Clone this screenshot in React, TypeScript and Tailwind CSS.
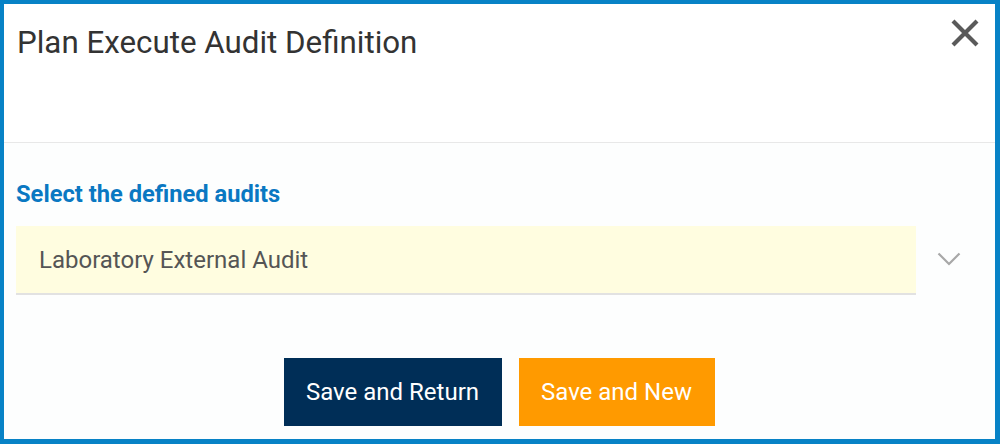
export default function App() {
  return (
    <div
      className="w-[1000px] h-[444px] flex flex-col bg-white border-t-4 border-l-4 border-r-[5px] border-b-[5px] border-[#0782c6]"
      style={{ fontFamily: 'Roboto, "Liberation Sans", sans-serif' }}
    >
      <div className="h-[139px] border-b border-[#e8e8e8] flex justify-between items-start pl-[13px] pr-[14px]">
        <h1 className="mt-[21px] text-[31.3px] leading-[36px] text-[#333333]">
          Plan Execute Audit Definition
        </h1>
        <button className="mt-[13px] w-[32px] h-[32px] flex items-center justify-center">
          <svg width="30" height="30" viewBox="0 0 30 30" fill="none">
            <path d="M3 3L27 27M27 3L3 27" stroke="#5a5a5a" strokeWidth="4.2" />
          </svg>
        </button>
      </div>

      <div className="flex-1 flex flex-col bg-[#fdfefe] pl-[12px] pr-[13px]">
        <label className="mt-[37px] text-[23.7px] leading-[28px] font-bold text-[#0a78c2]">
          Select the defined audits
        </label>
        <div className="mt-[18px] flex items-stretch h-[69px]">
          <div className="w-[900px] bg-[#fffde0] border-b-2 border-[#e2e2e2] flex items-center pl-[23px] text-[24px] text-[#555555]">
            Laboratory External Audit
          </div>
          <div className="w-[66px] flex items-center justify-center pb-[3px]">
            <svg width="24" height="14" viewBox="0 0 24 14" fill="none">
              <path d="M1.5 1.5L12 12L22.5 1.5" stroke="#a8a8a8" strokeWidth="2.2" />
            </svg>
          </div>
        </div>
        <div className="mt-[63px] flex justify-center gap-[17px]">
          <button className="w-[218px] h-[68px] bg-[#002e57] text-white text-[24px]">
            Save and Return
          </button>
          <button className="w-[196px] h-[68px] bg-[#ff9a00] text-white text-[24px]">
            Save and New
          </button>
        </div>
      </div>
    </div>
  )
}
